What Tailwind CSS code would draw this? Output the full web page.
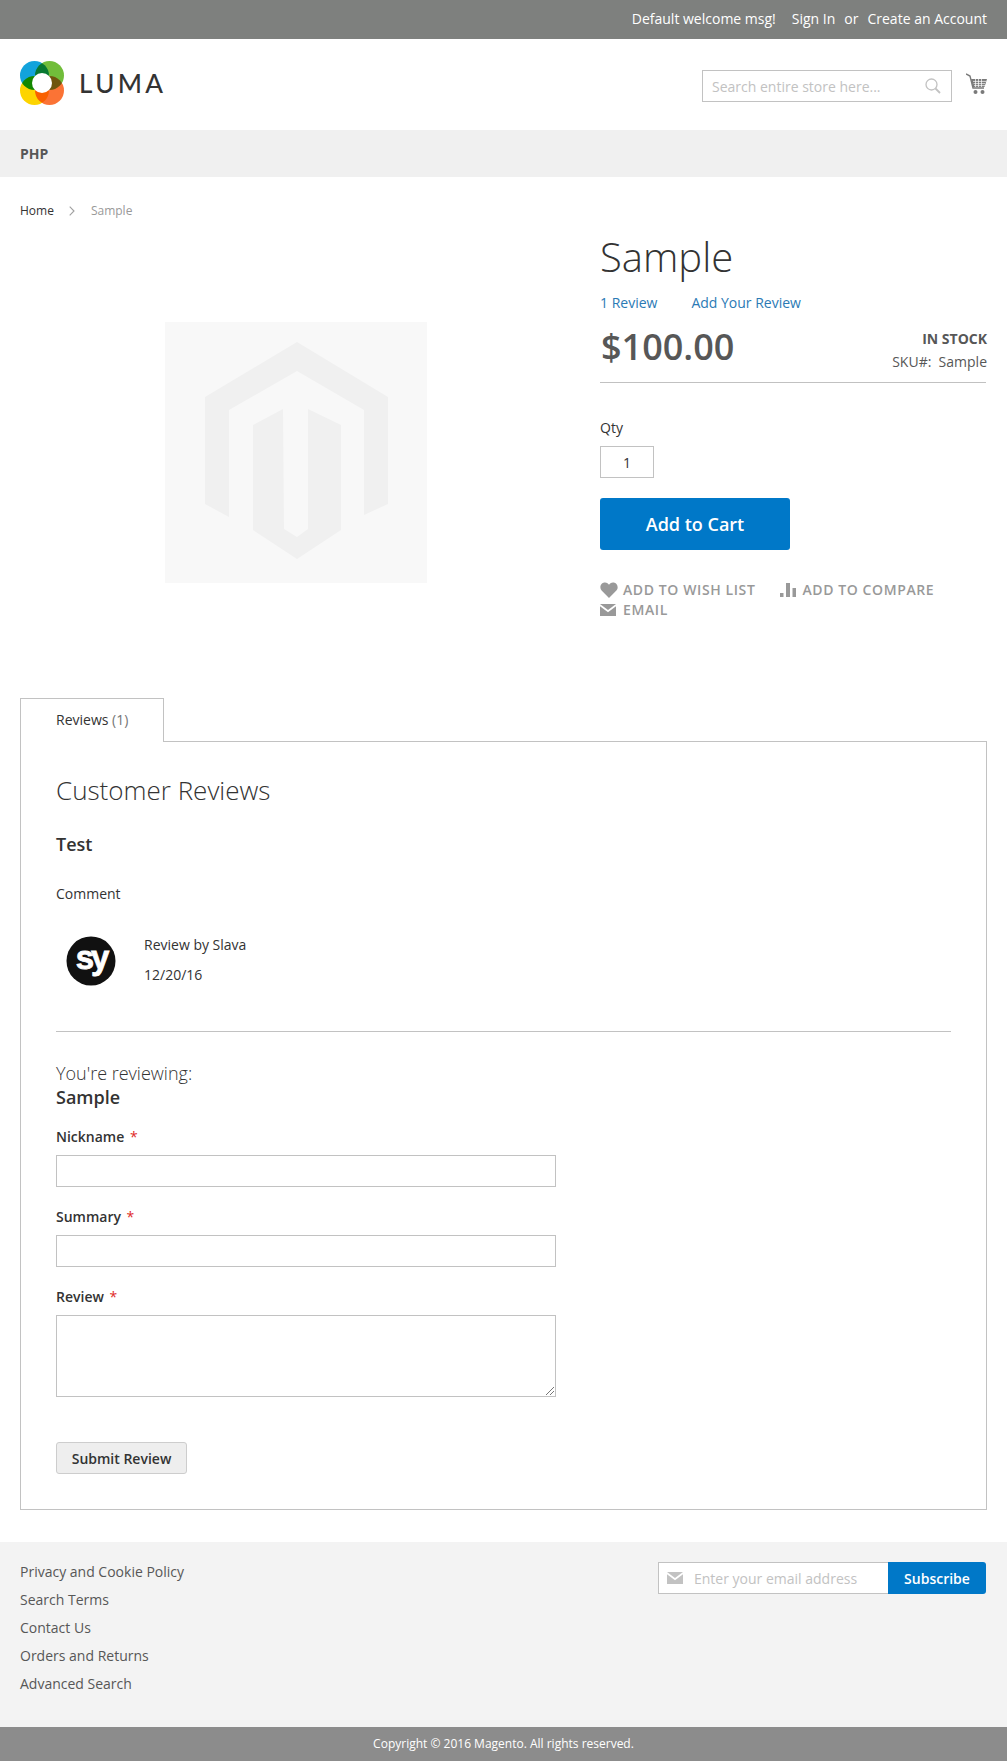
<!DOCTYPE html>
<html>
<head>
<meta charset="utf-8">
<script src="https://cdn.jsdelivr.net/npm/@tailwindcss/browser@4"></script>
</head>
<body class="bg-white font-['Open_Sans',sans-serif] text-[14px] text-[#333]">
<div class="w-[1007px] h-[1761px] flex flex-col overflow-hidden">

<div class="h-[39px] shrink-0 bg-[#7e807e] text-white flex items-center justify-end pr-[20px] pb-[2px]">
  <span>Default welcome msg!</span><span class="ml-[16px]">Sign In</span><span class="ml-[9px]">or</span><span class="ml-[9px]">Create an Account</span>
</div>

<header class="h-[91px] shrink-0 flex items-start justify-between px-[20px]">
  <div class="flex items-center mt-[22px]">
    <svg width="44" height="44" viewBox="0 0 44 44" class="isolate">
      <circle cx="14.5" cy="14.5" r="14.5" fill="#12a3dc" class="mix-blend-multiply"/>
      <circle cx="29.5" cy="14.5" r="14.5" fill="#71bd3a" class="mix-blend-multiply"/>
      <circle cx="14.5" cy="29.5" r="14.5" fill="#fdd400" class="mix-blend-multiply"/>
      <circle cx="29.5" cy="29.5" r="14.5" fill="#fb7335" class="mix-blend-multiply"/>
      <circle cx="22" cy="22" r="10" fill="#fff"/>
    </svg>
    <span class="ml-[15px] font-['Lato',sans-serif] text-[26px] leading-none font-medium tracking-[3.4px] text-[#333]">LUMA</span>
  </div>
  <div class="flex items-start mt-[31px]">
    <div class="w-[250px] h-[32px] border border-[#c2c2c2] flex items-center justify-between pl-[9px] pr-[10px]">
      <span class="text-[#c2c2c2]">Search entire store here...</span>
      <svg width="16" height="16" viewBox="0 0 16 16" fill="none" stroke="#c2c2c2" stroke-width="1.3"><circle cx="6.5" cy="6.5" r="5.5"/><path d="M10.5 10.5 L15 15" stroke-width="1.8"/></svg>
    </div>
    <svg class="ml-[14px] mt-[3px]" width="21" height="22" viewBox="0 0 21 22">
      <path d="M0 1 L4 3 L7 15 L18 15" fill="none" stroke="#7a7a7a" stroke-width="1.4"/>
      <path d="M5 6 H21 L18.5 14 H7 Z" fill="#7a7a7a"/>
      <path d="M7 8.4 H20 M7.5 10.6 H19 M8 12.6 H19 M9.5 6 V14 M12.5 6 V14 M15.5 6 V14" stroke="#fff" stroke-width=".7"/>
      <circle cx="9.5" cy="19" r="2" fill="#7a7a7a"/><circle cx="16.5" cy="19" r="2" fill="#7a7a7a"/>
    </svg>
  </div>
</header>

<nav class="h-[47px] shrink-0 bg-[#f0f0f0] flex items-center px-[20px] font-bold text-[#575757]">PHP</nav>

<div class="h-[66px] shrink-0 flex items-center px-[20px] pt-[2px] text-[12px]">
  <span class="text-[#333]">Home</span>
  <svg class="ml-[15px] mr-[16px]" width="6" height="10" viewBox="0 0 6 10" fill="none" stroke="#a0a0a0" stroke-width="1.1"><path d="M.7 .7 L5 5 L.7 9.3"/></svg>
  <span class="text-[#999]">Sample</span>
</div>

<main class="h-[455px] shrink-0 flex pl-[20px] pr-[20px]">
  <div class="w-[580px] shrink-0 pl-[145px] pt-[79px]">
    <div class="w-[262px] h-[261px] bg-[#f8f8f8] flex items-center justify-center pb-[4px] pl-[2px]">
      <svg width="184" height="217" viewBox="0 0 184 217" fill="#f0f0f0">
        <path d="M92 0 L183 55 L183 162 L159 173 L159 68 L92 29 L24 68 L24 175 L0 162 L0 55 Z"/>
        <path d="M78 67 L48 83 L48 188 L92 217 L136 188 L136 83 L103 67 L103 187 L92 195 L79 187 Z"/>
      </svg>
    </div>
  </div>
  <div class="flex-1 min-w-0">
    <h1 class="text-[40px] leading-[50px] font-light text-[#333] mt-[-11px]">Sample</h1>
    <div class="flex text-[#2b7ab5] mt-[11px] leading-[20px]"><span>1 Review</span><span class="ml-[34px]">Add Your Review</span></div>
    <div class="flex justify-between mt-[11px] h-[59px] border-b border-[#c1c1c1] mr-px">
      <span class="text-[36px] font-semibold leading-[46px] text-[#575757] pl-px">$100.00</span>
      <div class="text-right mr-[-1px] pt-[5px]">
        <div class="font-bold text-[#575757] leading-[20px]">IN STOCK</div>
        <div class="text-[#575757] leading-[20px] mt-[3px]">SKU#:&nbsp; Sample</div>
      </div>
    </div>
    <div class="mt-[35px] leading-[20px]">Qty</div>
    <div class="mt-[8px] w-[54px] h-[32px] border border-[#c2c2c2] flex items-center justify-center">1</div>
    <div class="mt-[20px] w-[190px] h-[52px] rounded-[3px] bg-[#0078c8] text-white text-[18px] font-semibold flex items-center justify-center">Add to Cart</div>
    <div class="mt-[30px] flex items-center h-[20px] text-[#999] font-semibold text-[14px] tracking-[0.6px] leading-[20px]">
      <svg width="18" height="16" viewBox="0 0 18 16" fill="#999"><path d="M9 16 L1.6 8.6 C-1 5.6 .6 .4 5 .4 C7 .4 8.3 1.5 9 2.8 C9.7 1.5 11 .4 13 .4 C17.4 .4 19 5.6 16.4 8.6 Z"/></svg>
      <span class="ml-[5px]">ADD TO WISH LIST</span>
      <svg class="ml-[25px]" width="16" height="14" viewBox="0 0 16 14" fill="#999"><path d="M0 10 H3.5 V14 H0 Z M6 0 H10 V14 H6 Z M12.5 5 H16 V14 H12.5 Z"/></svg>
      <span class="ml-[6px]">ADD TO COMPARE</span>
    </div>
    <div class="flex items-center h-[20px] text-[#999] font-semibold text-[14px] tracking-[0.6px] leading-[20px]">
      <svg width="16" height="12" viewBox="0 0 16 12" fill="#999"><path d="M0 0 H16 L8 6 Z M0 2.2 L8 8.2 L16 2.2 V12 H0 Z"/></svg>
      <span class="ml-[7px]">EMAIL</span>
    </div>
  </div>
</main>

<section class="h-[812px] shrink-0 mx-[20px] relative" >
  <div class="absolute left-0 top-0 w-[144px] h-[44px] bg-white border border-b-0 border-[#c2c2c2] z-10 flex items-center pl-[35px] pb-[2px]">
    <span class="text-[#333]">Reviews <span class="text-[#757575]">(1)</span></span>
  </div>
  <div class="absolute inset-x-0 top-[43px] h-[769px] border border-[#c2c2c2] pl-[35px] pr-[35px] w-[967px]">
    <h2 class="text-[26px] font-light leading-[32px] mt-[32px] text-[#333]">Customer Reviews</h2>
    <div class="text-[18px] font-semibold leading-[24px] mt-[26px] text-[#333]">Test</div>
    <div class="leading-[20px] mt-[28px]">Comment</div>
    <div class="flex mt-[26px] h-[60px]">
      <svg class="ml-[10px] mt-[6px]" width="50" height="50" viewBox="0 0 50 50"><circle cx="25" cy="25" r="24.5" fill="#111"/><text x="25" y="33" text-anchor="middle" font-family="Liberation Sans" font-weight="700" font-size="33" letter-spacing="-3" fill="#fff" stroke="#fff" stroke-width=".8">sy</text></svg>
      <div class="ml-[28px] leading-[20px]">
        <div class="mt-[5px]">Review by Slava</div>
        <div class="mt-[10px]">12/20/16</div>
      </div>
    </div>
    <div class="border-t border-[#c2c2c2] mt-[41px] w-[895px]"></div>
    <div class="text-[18px] font-light leading-[24px] mt-[29px]">You're reviewing:</div>
    <div class="text-[18px] font-semibold leading-[24px]">Sample</div>
    <div class="font-semibold leading-[20px] mt-[18px]">Nickname <span class="text-[#e02b27] ml-[2px] font-normal">*</span></div>
    <div class="w-[500px] h-[32px] border border-[#c2c2c2] mt-[8px]"></div>
    <div class="font-semibold leading-[20px] mt-[20px]">Summary <span class="text-[#e02b27] ml-[2px] font-normal">*</span></div>
    <div class="w-[500px] h-[32px] border border-[#c2c2c2] mt-[8px]"></div>
    <div class="font-semibold leading-[20px] mt-[20px]">Review <span class="text-[#e02b27] ml-[2px] font-normal">*</span></div>
    <div class="w-[500px] h-[82px] border border-[#c2c2c2] mt-[8px] relative">
      <svg class="absolute right-0 bottom-0" width="10" height="10" viewBox="0 0 10 10" stroke="#666" stroke-width=".9"><path d="M1 9 L9 1 M5 9 L9 5"/></svg>
    </div>
    <div class="w-[131px] h-[32px] mt-[45px] rounded-[3px] border border-[#cdcdcd] bg-[#eee] font-semibold flex items-center justify-center text-[#333]">Submit Review</div>
  </div>
</section>

<footer class="h-[185px] shrink-0 mt-[32px] bg-[#f3f3f3] flex justify-between px-[20px]">
  <div class="pt-[16px] text-[#575757] leading-[28px]">
    <div>Privacy and Cookie Policy</div>
    <div>Search Terms</div>
    <div>Contact Us</div>
    <div>Orders and Returns</div>
    <div>Advanced Search</div>
  </div>
  <div class="flex mt-[20px] h-[32px] mr-[1px]">
    <div class="w-[230px] bg-white border border-r-0 border-[#c2c2c2] flex items-center pl-[8px]">
      <svg width="16" height="12" viewBox="0 0 16 12" fill="#c2c2c2"><path d="M0 0 H16 L8 6 Z M0 2.2 L8 8.2 L16 2.2 V12 H0 Z"/></svg>
      <span class="ml-[11px] text-[#c2c2c2]">Enter your email address</span>
    </div>
    <div class="w-[98px] bg-[#0078c8] text-white font-semibold flex items-center justify-center rounded-r-[3px]">Subscribe</div>
  </div>
</footer>
<div class="h-[34px] shrink-0 bg-[#8c8c8c] text-white text-[12px] flex items-center justify-center">Copyright © 2016 Magento. All rights reserved.</div>
</div>
</body>
</html>
